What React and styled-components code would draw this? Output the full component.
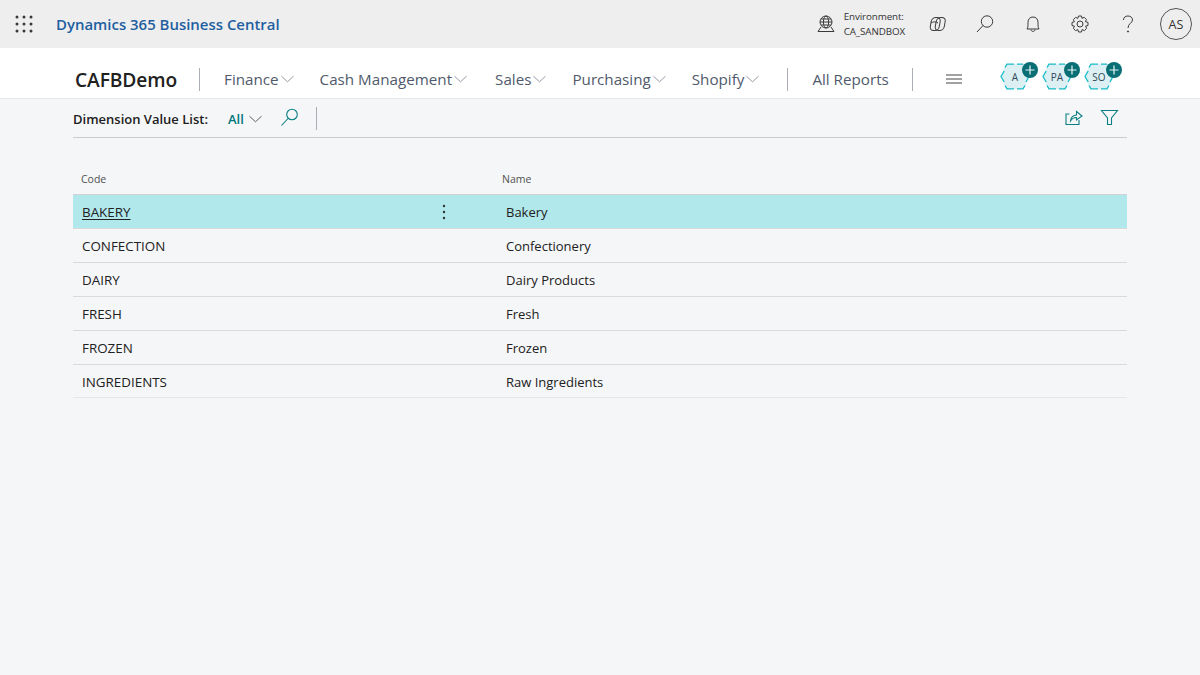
import React from "react";
import styled, { createGlobalStyle } from "styled-components";

const GlobalStyle = createGlobalStyle`
  html, body {
    margin: 0;
    padding: 0;
    height: 100%;
    background: #f5f6f8;
    font-family: "Open Sans", "Noto Sans", sans-serif;
  }
`;

const Page = styled.div`
  width: 1200px;
  height: 675px;
  overflow: hidden;
  background: #f5f6f8;
`;

const TopBar = styled.header`
  height: 48px;
  background: #eeeeef;
  display: flex;
  align-items: center;
  padding: 0 8px 0 15px;
  box-sizing: border-box;
`;

const Waffle = styled.svg`
  width: 18px;
  height: 18px;
  margin-right: 23px;
`;

const Brand = styled.div`
  color: #1f5f9f;
  font-size: 14.95px;
  font-weight: 600;
  flex: 1;
  white-space: nowrap;
`;

const EnvBlock = styled.div`
  display: flex;
  align-items: center;
  gap: 8px;
  margin-right: 21px;
`;

const EnvText = styled.div`
  font-size: 9.8px;
  line-height: 15px;
  letter-spacing: -0.1px;
  color: #333;
`;

const TopIcon = styled.svg`
  width: 20px;
  height: 20px;
  margin-right: ${(p) => p.$gap ?? 28}px;
  fill: none;
  stroke: ${(p) => p.$color || "#3a3a3a"};
  stroke-width: 1;
`;

const Avatar = styled.div`
  width: 32px;
  height: 32px;
  box-sizing: border-box;
  border: 1px solid #555;
  border-radius: 50%;
  display: flex;
  align-items: center;
  justify-content: center;
  font-size: 12.5px;
  color: #333;
`;

const NavBar = styled.nav`
  height: 51px;
  background: #fff;
  border-bottom: 1px solid #e4e6ea;
  box-sizing: border-box;
  display: flex;
  align-items: center;
  padding: 12px 0 0 75px;
`;

const Company = styled.div`
  font-size: 19.2px;
  font-weight: 600;
  color: #212121;
  letter-spacing: -0.1px;
  margin-right: 22px;
`;

const Divider = styled.div`
  width: 1px;
  height: 23px;
  background: #a9aeb5;
  margin: ${(p) => p.$margin || "0"};
`;

const NavItem = styled.div`
  display: flex;
  align-items: center;
  gap: 2px;
  font-size: 15.2px;
  color: #505a6b;
  white-space: nowrap;
  margin-right: ${(p) => p.$gap ?? 26}px;
`;

const Chevron = styled.svg`
  width: ${(p) => p.$size || 13}px;
  height: 8px;
  fill: none;
  stroke: ${(p) => p.$color || "#8a919c"};
  stroke-width: 1;
`;

const Hamburger = styled.svg`
  width: 18px;
  height: 12px;
  stroke: #444;
  stroke-width: 1;
  margin-right: 37px;
`;

const Tiles = styled.div`
  display: flex;
  gap: 12px;
  margin-top: -6px;
`;

const Tile = styled.div`
  position: relative;
  width: 30px;
  height: 27px;
  display: flex;
  align-items: center;
  justify-content: center;
  font-size: 10px;
  font-weight: 500;
  color: #33485a;
`;

const TileShape = styled.svg`
  position: absolute;
  left: 0;
  top: 0;
  width: 30px;
  height: 27px;
`;

const TileLabel = styled.span`
  position: relative;
  top: 1px;
`;

const Plus = styled.svg`
  position: absolute;
  right: -8px;
  top: -1px;
  width: 16px;
  height: 16px;
`;

const Content = styled.main`
  padding: 0 73px;
`;

const ActionBar = styled.div`
  height: 39px;
  box-sizing: border-box;
  border-bottom: 1px solid #c8cbd0;
  padding-top: 1px;
  display: flex;
  align-items: center;
`;

const ListTitle = styled.div`
  font-size: 13px;
  font-weight: 600;
  color: #212121;
  margin-right: 20px;
`;

const ViewName = styled.div`
  display: flex;
  align-items: center;
  gap: 5px;
  font-size: 13px;
  font-weight: 600;
  color: #00787c;
  margin-right: 18px;
`;

const ActionIcon = styled.svg`
  width: 19px;
  height: 19px;
  margin-bottom: 2px;
  fill: none;
  stroke: #0b7f83;
  stroke-width: 1.1;
  margin-right: ${(p) => p.$gap ?? 0}px;
`;

const Spacer = styled.div`
  flex: 1;
`;

const Table = styled.div`
  margin-top: 24px;
`;

const HeaderRow = styled.div`
  display: grid;
  grid-template-columns: 429px 1fr;
  height: 33px;
  box-sizing: border-box;
  padding-top: 2px;
  align-items: center;
  border-bottom: 1px solid #d0d2d6;
  font-size: 10.5px;
  color: #505050;
`;

const HeaderCell = styled.div`
  padding-left: ${(p) => p.$pad}px;
`;

const Row = styled.div`
  display: grid;
  grid-template-columns: 425px 1fr;
  height: 34px;
  box-sizing: border-box;
  align-items: center;
  border-bottom: 1px solid #d8dade;
  background: ${(p) => (p.$selected ? "#b1e8ec" : "transparent")};
  font-size: 13px;
  color: #212121;

  &:last-child {
    height: 33px;
    padding-top: 1px;
    border-bottom-color: #e4e6e9;
  }
`;

const CodeCell = styled.div`
  display: flex;
  align-items: center;
  justify-content: space-between;
  padding: 0 52px 0 9px;
  font-size: 13.4px;
`;

const CodeText = styled.span`
  text-decoration: ${(p) => (p.$selected ? "underline" : "none")};
  text-underline-offset: 2px;
`;

const NameCell = styled.div`
  padding-left: 8px;
`;

const MoreDots = styled.svg`
  width: 4px;
  height: 16px;
  fill: #333;
`;

const navItems = [
  { label: "Finance" },
  { label: "Cash Management", gap: 28 },
  { label: "Sales" },
  { label: "Purchasing" },
  { label: "Shopify" },
];
const rows = [
  ["BAKERY", "Bakery"],
  ["CONFECTION", "Confectionery"],
  ["DAIRY", "Dairy Products"],
  ["FRESH", "Fresh"],
  ["FROZEN", "Frozen"],
  ["INGREDIENTS", "Raw Ingredients"],
];
const tiles = ["A", "PA", "SO"];

const ChevronDown = ({ size, color }) => (
  <Chevron $size={size} $color={color} viewBox="0 0 14 8">
    <path d="M0.5 1 L7 7 L13.5 1" />
  </Chevron>
);

const App = () => (
  <Page>
    <GlobalStyle />
    <TopBar>
      <Waffle viewBox="0 0 18 18" fill="#3a3a3a">
        {[2, 9, 16].map((y) =>
          [2, 9, 16].map((x) => <circle key={`${x}-${y}`} cx={x} cy={y} r="1.5" />)
        )}
      </Waffle>
      <Brand>Dynamics 365 Business Central</Brand>
      <EnvBlock>
        <TopIcon $gap={0} viewBox="0 0 20 20">
          <circle cx="10" cy="8" r="6" />
          <ellipse cx="10" cy="8" rx="2.6" ry="6" />
          <path d="M4 8h12M5 5h10M5 11h10M5 13 L2 17.5 H18 L15 13" />
        </TopIcon>
        <EnvText>
          Environment:
          <br />
          CA_SANDBOX
        </EnvText>
      </EnvBlock>
      <TopIcon $gap={29} viewBox="0 0 20 20">
        <rect x="5" y="3.5" width="9" height="13" rx="4" transform="skewX(-10) translate(1.5 0)" />
        <rect x="10" y="3.5" width="9" height="13" rx="4" transform="skewX(-10) translate(1.5 0)" />
        <path d="M5 9 C7 7.5 10 7.5 12 9" />
      </TopIcon>
      <TopIcon $gap={28} viewBox="0 0 20 20">
        <circle cx="12" cy="7.5" r="5.7" />
        <path d="M8 11.5 L2 18" />
      </TopIcon>
      <TopIcon $gap={27} viewBox="0 0 20 20">
        <path d="M4 15 C5 13.5 5 12 5 8.5 C5 5 7 3 10 3 C13 3 15 5 15 8.5 C15 12 15 13.5 16 15 Z" />
        <path d="M8 15.5 C8 18 12 18 12 15.5" />
      </TopIcon>
      <TopIcon $gap={28} viewBox="0 0 20 20">
        <circle cx="10" cy="10" r="3" />
        <path d="M8.5 2 H11.5 L12 4.4 L14.2 3.3 L16.4 5.5 L15.4 7.7 L18 8.3 V11.5 L15.6 12.1 L16.6 14.4 L14.4 16.6 L12.1 15.5 L11.5 18 H8.5 L7.9 15.6 L5.6 16.6 L3.4 14.4 L4.5 12.2 L2 11.6 V8.4 L4.4 7.8 L3.4 5.6 L5.6 3.4 L7.8 4.4 Z" />
      </TopIcon>
      <TopIcon $gap={22} viewBox="0 0 20 20">
        <path d="M5.5 6 C5.5 3.3 7.5 2 10 2 C12.5 2 14.5 3.5 14.5 6 C14.5 9 10 9.5 10 14" />
        <circle cx="10" cy="17.5" r="0.6" fill="#3a3a3a" />
      </TopIcon>
      <Avatar>AS</Avatar>
    </TopBar>
    <NavBar>
      <Company>CAFBDemo</Company>
      <Divider $margin="0 24px 0 0" />
      {navItems.map(({ label, gap }) => (
        <NavItem key={label} $gap={gap}>
          {label}
          <ChevronDown />
        </NavItem>
      ))}
      <Divider $margin="0 24px 0 2px" />
      <NavItem $gap={23}>All Reports</NavItem>
      <Divider $margin="0 32px 0 0" />
      <Hamburger viewBox="0 0 18 12">
        <path d="M1 2h16M1 6h16M1 10h16" />
      </Hamburger>
      <Tiles>
        {tiles.map((t) => (
          <Tile key={t}>
            <TileShape viewBox="0 0 30 27">
              <polygon points="6,1 24,1 29,13.5 24,26 6,26 1,13.5" fill="#dcf0f3" stroke="none" />
              <path
                d="M5 4.5 L7 1.2 H14 M17 1.2 H23 M4.2 8 L1 13.5 L4.2 19 M5 22.5 L7 25.8 H14 M17 25.8 H23 L25 22.5 M26 19 L29 13.5"
                fill="none"
                stroke="#17bcc8"
                strokeWidth="1.3"
              />
            </TileShape>
            <TileLabel>{t}</TileLabel>
            <Plus viewBox="0 0 16 16">
              <circle cx="8" cy="8" r="8" fill="#0a6f75" />
              <path d="M8 3.5v9M3.5 8h9" stroke="#e8f6f6" strokeWidth="1.2" />
            </Plus>
          </Tile>
        ))}
      </Tiles>
    </NavBar>
    <Content>
      <ActionBar>
        <ListTitle>Dimension Value List:</ListTitle>
        <ViewName>
          All
          <ChevronDown size={13} color="#555" />
        </ViewName>
        <ActionIcon $gap={17} viewBox="0 0 19 19">
          <circle cx="12" cy="6.5" r="5.3" />
          <path d="M8 10.5 L1.5 17.5" />
        </ActionIcon>
        <Divider />
        <Spacer />
        <ActionIcon $gap={17} viewBox="0 0 19 19">
          <path d="M5.5 6 H2 V16.5 H15 V12" />
          <path d="M6.5 13 C6.5 9.5 9.5 7 12.5 7 V3.5 L18 8 L12.5 12 V9.5 C10 9.5 8 10.5 6.5 13 Z" />
        </ActionIcon>
        <ActionIcon $gap={8} viewBox="0 0 19 19">
          <path d="M1.5 2.5 H17.5 L11.5 10 V16.5 H7.5 V10 Z" />
        </ActionIcon>
      </ActionBar>
      <Table>
        <HeaderRow>
          <HeaderCell $pad={8}>Code</HeaderCell>
          <HeaderCell $pad={0}>Name</HeaderCell>
        </HeaderRow>
        {rows.map(([code, name], i) => (
          <Row key={code} $selected={i === 0}>
            <CodeCell>
              <CodeText $selected={i === 0}>{code}</CodeText>
              {i === 0 && (
                <MoreDots viewBox="0 0 4 16">
                  <circle cx="2" cy="2" r="1.2" />
                  <circle cx="2" cy="8" r="1.2" />
                  <circle cx="2" cy="14" r="1.2" />
                </MoreDots>
              )}
            </CodeCell>
            <NameCell>{name}</NameCell>
          </Row>
        ))}
      </Table>
    </Content>
  </Page>
);

export default App;
